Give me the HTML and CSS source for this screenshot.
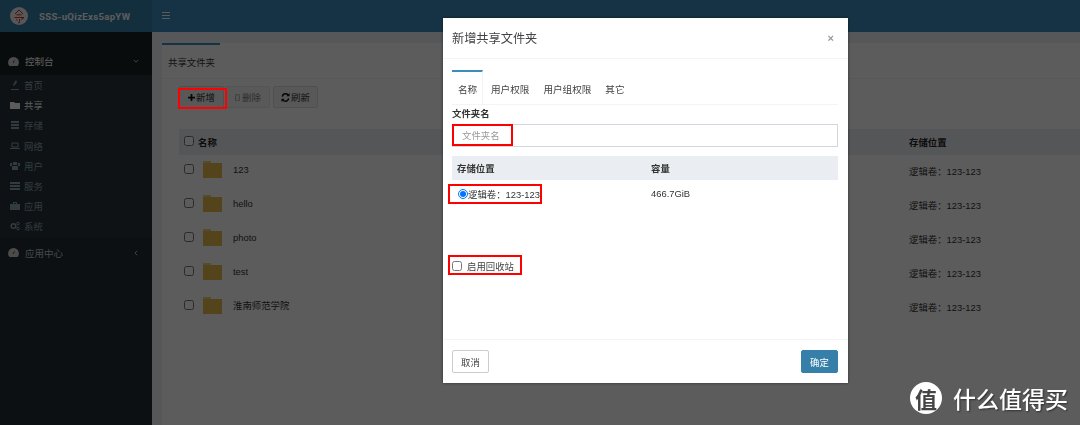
FILE: index.html
```html
<!DOCTYPE html>
<html lang="en">
<head>
<meta charset="UTF-8">
<title>共享文件夹</title>
<link rel="stylesheet" href="styles.css">
</head>
<body>
<div class="app">
    <aside class="sidebar">
        <div class="logo">
            <svg class="logo-mark" viewBox="0 0 18 18">
                <circle cx="9" cy="9" r="9" fill="#f0f0f0"/>
                <path d="M5 7 9 3l4 4M6.500 7.800h5M4.500 10.500h9.500L11 12.500M9.500 12v3.500l-1.500.5M6 12.500l1.500.8" fill="none" stroke="#d0201c" stroke-width=".9"/>
            </svg>
            <span class="logo-text">SSS-uQizExs5apYW</span>
        </div>
        <div class="menu-head active">
            <svg class="ico-head" viewBox="0 0 12 10"><path d="M6 0a6 6 0 0 0-6 6c0 1.500.5 3 1.500 4h9c1-1 1.500-2.500 1.500-4a6 6 0 0 0-6-6zM6.500 6.500 5.200 6 7.500 2.500z" fill="#d0d0d0" fill-rule="evenodd"/></svg>
            <span>控制台</span>
            <svg class="chev" viewBox="0 0 8 5"><path d="M1 1l3 3 3-3" fill="none" stroke="#c8c8c8" stroke-width="1.200"/></svg>
        </div>
        <ul class="menu">
            <li><svg class="ico" viewBox="0 0 10 10"><path d="M6 0 3 5l1 1 3-4zM1 9h8v1H1z" fill="#8aa4af"/></svg>首页</li>
            <li class="current"><svg class="ico" viewBox="0 0 10 10"><path d="M0 2h4l1 1h5v6H0z" fill="#fff"/></svg>共享</li>
            <li><svg class="ico" viewBox="0 0 10 10"><path d="M1 1h8v2H1zM1 4h8v2H1zM1 7h8v2H1z" fill="#8aa4af"/></svg>存储</li>
            <li><svg class="ico" viewBox="0 0 10 10"><path d="M2 2h6v4H2zM0 7.500h10" fill="none" stroke="#8aa4af"/></svg>网络</li>
            <li><svg class="ico" viewBox="0 0 10 10"><path d="M3 1h4v3H3zM0 2h2v3H0zM8 2h2v3H8zM2 5h6v4H2z" fill="#8aa4af"/></svg>用户</li>
            <li><svg class="ico" viewBox="0 0 10 10"><path d="M0 1h10v2H0zM0 4h10v2H0zM0 7h10v2H0z" fill="#8aa4af"/></svg>服务</li>
            <li><svg class="ico" viewBox="0 0 10 10"><path d="M3 1h4v2h3v6H0V3h3zM4 2v1h2V2z" fill="#8aa4af" fill-rule="evenodd"/></svg>应用</li>
            <li><svg class="ico" viewBox="0 0 10 10"><circle cx="3.500" cy="5" r="2.300" fill="none" stroke="#8aa4af" stroke-width="1.500"/><circle cx="8" cy="2.500" r="1.300" fill="none" stroke="#8aa4af"/><circle cx="8" cy="7.500" r="1.300" fill="none" stroke="#8aa4af"/></svg>系统</li>
        </ul>
        <div class="menu-head">
            <svg class="ico-head" viewBox="0 0 12 10"><path d="M6 0a6 6 0 0 0-6 6c0 1.500.5 3 1.500 4h9c1-1 1.500-2.500 1.500-4a6 6 0 0 0-6-6zM6.500 6.500 5.200 6 7.500 2.500z" fill="#d0d0d0" fill-rule="evenodd"/></svg>
            <span>应用中心</span>
            <svg class="chev" viewBox="0 0 5 8"><path d="M4 1 1 4l3 3" fill="none" stroke="#c8c8c8" stroke-width="1.200"/></svg>
        </div>
    </aside>

    <div class="main">
        <header class="navbar">
            <div class="burger"><i></i><i></i><i></i></div>
        </header>
        <section class="content">
            <div class="box">
                <div class="box-tabs"><span class="box-tab">共享文件夹</span></div>
                <div class="toolbar">
                    <button class="btn mark-wrap">
                        <svg class="btn-ico" viewBox="0 0 8 8"><path d="M3 0h2v3h3v2H5v3H3V5H0V3h3z" fill="#111"/></svg>新增
                        <span class="mark mark-add"></span>
                    </button>
                    <button class="btn btn-off">
                        <svg class="btn-ico" viewBox="0 0 8 8"><path d="M1 1h6M2 2v6h4V2" fill="none" stroke="#666"/></svg>删除
                    </button>
                    <button class="btn btn-gap">
                        <svg class="btn-ico wide" viewBox="0 0 10 10"><path d="M1.500 4a3.700 3.700 0 0 1 7-1M8.500 6a3.700 3.700 0 0 1-7 1" fill="none" stroke="#111" stroke-width="1.600"/><path d="M9.500 0v3.700H6M.5 10V6.300H4" fill="#111"/></svg>刷新
                    </button>
                </div>
                <table class="list">
                    <thead>
                        <tr>
                            <th class="col-check"><input type="checkbox"></th>
                            <th>名称</th>
                            <th class="col-store">存储位置</th>
                        </tr>
                    </thead>
                    <tbody>
                        <tr>
                            <td class="col-check"><input type="checkbox"></td>
                            <td class="col-name"><span class="folder"></span>123</td>
                            <td class="col-store">逻辑卷：123-123</td>
                        </tr>
                        <tr>
                            <td class="col-check"><input type="checkbox"></td>
                            <td class="col-name"><span class="folder"></span>hello</td>
                            <td class="col-store">逻辑卷：123-123</td>
                        </tr>
                        <tr>
                            <td class="col-check"><input type="checkbox"></td>
                            <td class="col-name"><span class="folder"></span>photo</td>
                            <td class="col-store">逻辑卷：123-123</td>
                        </tr>
                        <tr>
                            <td class="col-check"><input type="checkbox"></td>
                            <td class="col-name"><span class="folder"></span>test</td>
                            <td class="col-store">逻辑卷：123-123</td>
                        </tr>
                        <tr>
                            <td class="col-check"><input type="checkbox"></td>
                            <td class="col-name"><span class="folder"></span>淮南师范学院</td>
                            <td class="col-store">逻辑卷：123-123</td>
                        </tr>
                    </tbody>
                </table>
            </div>
        </section>
    </div>
</div>

<div class="backdrop">
    <div class="modal">
        <div class="modal-head">
            <h4>新增共享文件夹</h4>
            <span class="close">×</span>
        </div>
        <div class="modal-body">
            <ul class="tabs">
                <li class="on">名称</li>
                <li>用户权限</li>
                <li>用户组权限</li>
                <li>其它</li>
            </ul>
            <label class="field-label">文件夹名</label>
            <div class="mark-wrap">
                <input class="field" type="text" placeholder="文件夹名">
                <span class="mark mark-name"></span>
            </div>
            <div class="vol-head">
                <span class="vol-a">存储位置</span>
                <span>容量</span>
            </div>
            <div class="vol-row mark-wrap">
                <label class="vol-a"><input type="radio" checked>逻辑卷：123-123</label>
                <span>466.7GiB</span>
                <span class="mark mark-vol"></span>
            </div>
            <div class="recycle mark-wrap">
                <input type="checkbox">
                <span>启用回收站</span>
                <span class="mark mark-recycle"></span>
            </div>
        </div>
        <div class="modal-foot">
            <button class="btn-cancel">取消</button>
            <button class="btn-ok">确定</button>
        </div>
    </div>
</div>

<div class="watermark">
    <span class="wm-badge">值</span>
    <span class="wm-text">什么值得买</span>
</div>
</body>
</html>
```

FILE: styles.css
```css
* {
    box-sizing: border-box;
}
body {
    margin: 0;
    height: 425px;
    overflow: hidden;
    background: #fff;
    color: #333;
    font-family: "Liberation Sans", "Noto Sans CJK SC", sans-serif;
    font-size: 9.4px;
}
input[type="checkbox"], input[type="radio"] {
    width: 10px;
    height: 10px;
    margin: 0;
}

.app {
    display: flex;
    height: 425px;
}
.sidebar {
    width: 152px;
    flex: none;
    background: #222d32;
}
.logo {
    height: 32px;
    background: #367fa9;
    display: flex;
    align-items: center;
    padding-left: 10px;
    color: #fff;
}
.logo-mark {
    width: 18px;
    height: 18px;
    margin-right: 11px;
}
.logo-text {
    font-family: Roboto, sans-serif;
    font-weight: 700;
    font-size: 9.600px;
    letter-spacing: .3px;
}
.menu-head {
    height: 32px;
    display: flex;
    align-items: center;
    padding: 0 13px 0 8px;
    color: #b8c7ce;
    font-size: 9.500px;
}
.menu-head.active {
    height: 43px;
    padding-top: 15px;
    background: #1a2226;
    color: #fff;
}
.ico-head {
    width: 11px;
    height: 9px;
    margin-right: 6px;
}
.chev {
    margin-left: auto;
    width: 6px;
    height: 6px;
}
.menu {
    list-style: none;
    margin: 0;
    padding: 0;
    background: #283439;
}
.menu li {
    height: 20.200px;
    display: flex;
    align-items: center;
    padding-left: 10px;
    color: #8aa4af;
}
.menu li.current {
    color: #fff;
}
.ico {
    width: 10px;
    height: 10px;
    margin-right: 4px;
}

.main {
    flex: 1;
    display: flex;
    flex-direction: column;
    background: #ecf0f5;
}
.navbar {
    height: 32px;
    flex: none;
    background: #3c8dbc;
    padding: 12px 0 0 10px;
}
.burger {
    width: 8px;
}
.burger i {
    display: block;
    height: 1px;
    margin-bottom: 2px;
    background: #fff;
}
.content {
    flex: 1;
    padding: 11px 0 0 10px;
}
.box {
    height: 100%;
    background: #fff;
}
.box-tabs {
    height: 36px;
    border-bottom: 1px solid #f4f4f4;
}
.box-tab {
    display: block;
    width: 58px;
    height: 36px;
    border-top: 2px solid #3c8dbc;
    padding: 10px 0 0 6px;
}
.toolbar {
    display: flex;
    gap: 1px;
    padding: 7px 0 0 17px;
}
.btn {
    position: relative;
    display: flex;
    align-items: center;
    justify-content: center;
    width: 45px;
    height: 22px;
    padding: 0;
    background: #f4f4f4;
    border: 1px solid #ddd;
    border-radius: 2px;
    color: #333;
    font: inherit;
}
.btn-off {
    opacity: .65;
}
.btn-gap {
    margin-left: 2px;
}
.btn-ico {
    width: 7px;
    height: 7px;
    margin-right: 1px;
}
.btn-ico.wide {
    width: 9px;
    height: 9px;
}
.list {
    width: 901px;
    margin: 21px 0 0 17px;
    border-collapse: collapse;
}
.list th {
    height: 26px;
    background: #eaeef2;
    text-align: left;
    color: #222;
    padding: 0;
}
.list td {
    height: 34px;
    padding: 0 0 2px;
}
.list td.col-check, .list td.col-name {
    padding-bottom: 4px;
}
.col-check {
    width: 19px;
    padding-left: 5px !important;
}
.col-name {
    padding-left: 5px !important;
}
.col-store {
    width: 171px;
}
.folder {
    display: inline-block;
    position: relative;
    vertical-align: middle;
    width: 19px;
    height: 15px;
    margin: 0 11px 0 0;
    background: #e5bc4d;
}
.folder::before {
    content: "";
    position: absolute;
    left: 0;
    top: -2px;
    width: 8px;
    height: 2px;
    background: #ecd182;
}

.backdrop {
    position: fixed;
    inset: 0;
    background: rgba(0, 0, 0, .64);
    padding: 18px 0 0 443px;
}
.modal {
    width: 405px;
    height: 365px;
    background: #fff;
    display: flex;
    flex-direction: column;
    box-shadow: 0 0 3px rgba(0, 0, 0, .5);
}
.modal-head {
    height: 41px;
    flex: none;
    display: flex;
    align-items: center;
    justify-content: space-between;
    padding: 0 14px 0 9px;
    border-bottom: 1px solid #f4f4f4;
}
.modal-head h4 {
    margin: 0;
    font-weight: 400;
    font-size: 12.200px;
    color: #444;
}
.close {
    font-size: 11px;
    font-weight: 700;
    color: #999;
}
.modal-body {
    flex: 1;
    padding: 11px 10px 0 9px;
}
.tabs {
    display: flex;
    list-style: none;
    margin: 0;
    padding: 0;
    height: 35px;
    border-bottom: 1px solid #f4f4f4;
    font-size: 9.600px;
}
.tabs li {
    padding: 12px 6px 0 8px;
    color: #444;
}
.tabs li.on {
    width: 31px;
    padding: 10px 0 0 6px;
    border-top: 2px solid #3c8dbc;
    border-right: 1px solid #f4f4f4;
}
.field-label {
    display: block;
    margin-top: 2px;
    height: 17px;
    line-height: 14px;
    font-weight: 700;
    color: #333;
}
.field {
    display: block;
    width: 100%;
    height: 23px;
    border: 1px solid #d2d6de;
    padding: 0 9px;
    font: inherit;
}
.field::placeholder {
    color: #999;
}
.vol-head, .vol-row {
    display: flex;
    align-items: center;
    padding-left: 5px;
}
.vol-head {
    height: 24px;
    margin-top: 9px;
    background: #eaeef2;
    font-weight: 700;
}
.vol-row {
    height: 27px;
}
.vol-a {
    width: 194px;
    display: flex;
    align-items: center;
}
.vol-row input {
    margin-left: 1px;
}
.recycle {
    display: flex;
    align-items: center;
    gap: 5px;
    margin-top: 52px;
    color: #444;
}
.modal-foot {
    height: 44px;
    flex: none;
    display: flex;
    align-items: center;
    justify-content: space-between;
    padding: 0 10px 0 9px;
    border-top: 1px solid #f4f4f4;
}
.btn-cancel, .btn-ok {
    width: 37px;
    height: 23px;
    padding: 0;
    border-radius: 2px;
    font: inherit;
}
.btn-cancel {
    background: #fff;
    border: 1px solid #ccc;
    color: #444;
}
.btn-ok {
    background: #367fa9;
    border: 1px solid #367fa9;
    color: #fff;
}

/* red annotation frames drawn over the screenshot */
.mark-wrap {
    position: relative;
}
.mark {
    position: absolute;
    z-index: 2;
    border: 2px solid #f00;
    pointer-events: none;
}
.mark-add {
    left: -2px;
    top: 1px;
    width: 49px;
    height: 21px;
}
.mark-name {
    left: 0;
    top: 0;
    width: 61px;
    height: 22px;
}
.mark-vol {
    left: -4px;
    top: 4px;
    width: 94px;
    height: 20px;
}
.mark-recycle {
    left: -4px;
    top: -4px;
    width: 74px;
    height: 20px;
}

.watermark {
    position: fixed;
    left: 910px;
    top: 382px;
    display: flex;
    align-items: center;
    gap: 11px;
    color: #fff;
}
.wm-badge {
    width: 32px;
    height: 32px;
    border-radius: 50%;
    background: #fff;
    color: #444;
    text-align: center;
    font: 700 22px/32px "Noto Sans CJK SC", sans-serif;
}
.wm-text {
    font: 500 23px/32px "Noto Sans CJK SC", sans-serif;
    text-shadow: 1px 1px 2px rgba(0, 0, 0, .5);
}
```
